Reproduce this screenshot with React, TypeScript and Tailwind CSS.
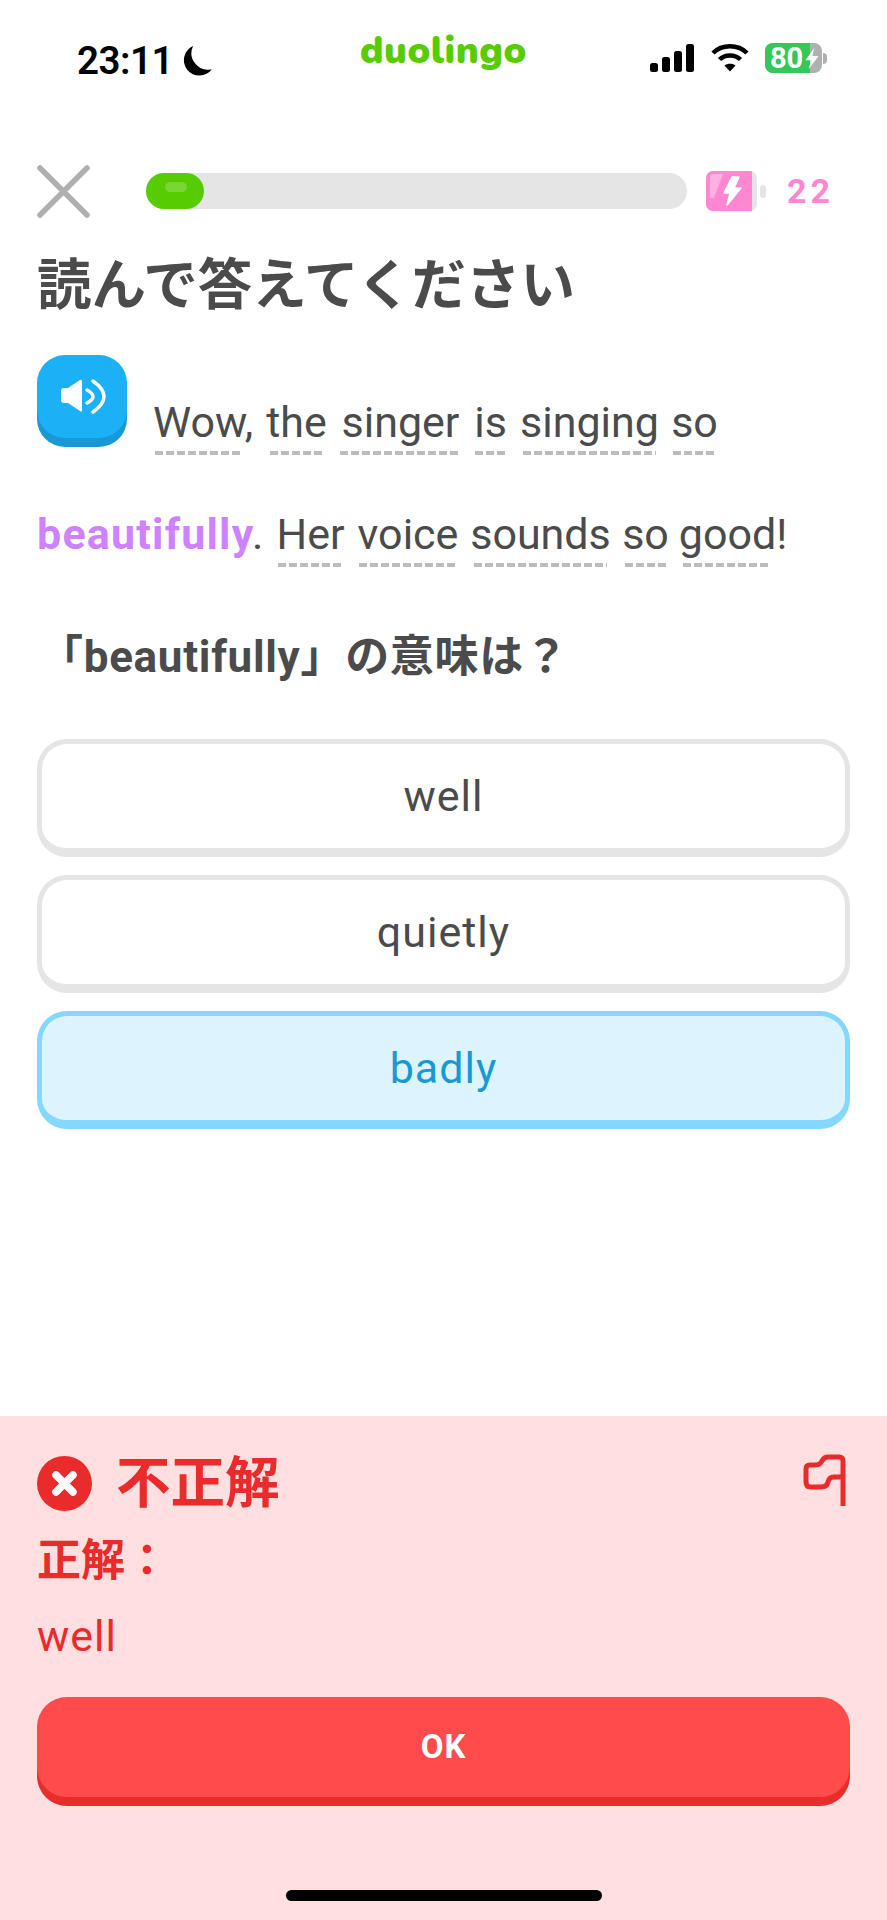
import { ReactNode } from 'react'

const SANS = "font-[Roboto,'Noto_Sans_CJK_JP',sans-serif]"

// one tappable word, dashed line underneath; the line is narrower than the glyphs on some words
function Word({ className, children }: { className: string; children: ReactNode }) {
  return (
    <span className={`flex flex-col shrink-0 ${className}`}>
      <span className="flex justify-center whitespace-nowrap leading-[52px]">{children}</span>
      <span className="h-[4px] mt-[3px] bg-[repeating-linear-gradient(90deg,#bdbdbd_0_8px,transparent_8px_11px)]" />
    </span>
  )
}

function StatusBar() {
  return (
    <div className="grid grid-cols-3 items-start h-[96px] pt-[33px]">
      <div className="flex items-center gap-[9px] pl-[77px] pt-[8px]">
        <span className="text-[38.5px] leading-[40px] font-semibold text-black tracking-[-0.5px]">23:11</span>
        <svg width="31" height="33" viewBox="0 0 28 30">
          <path d="M10 1 A14 14 0 1 0 27 22 A15 15 0 0 1 10 1 Z" fill="#000" />
        </svg>
      </div>
      <div className="text-center text-[38px] leading-[36px] font-[Nunito,Lato,sans-serif] font-black text-[#58cc02] tracking-[0.5px]">
        duolingo
      </div>
      <div className="flex items-center justify-end gap-[17px] pr-[60px] pt-[10px]">
        <svg width="44" height="28" viewBox="0 0 44 28" fill="#000">
          <rect x="0" y="19" width="8" height="9" rx="2.5" />
          <rect x="12" y="13" width="8" height="15" rx="2.5" />
          <rect x="24" y="7" width="8" height="21" rx="2.5" />
          <rect x="36" y="0" width="8" height="28" rx="2.5" />
        </svg>
        <svg width="38" height="28" viewBox="0 0 38 28" fill="none" stroke="#000" strokeWidth="4.5">
          <path d="M2 9 C11 0 27 0 36 9" />
          <path d="M8.5 15.5 C14 10 24 10 29.5 15.5" />
          <path d="M19 27.5 L13.5 21.5 C16 19 22 19 24.5 21.5 Z" fill="#000" stroke="none" />
        </svg>
        <div className="flex items-center -ml-[1px]">
          <div className="relative flex h-[30px] w-[57px] rounded-[8px] bg-[#b0b0b0]">
            <div className="w-[45px] rounded-l-[8px] bg-[#34c759]" />
            <span className="absolute left-[5px] top-0 text-[29px] leading-[30px] font-bold text-white">80</span>
            <svg className="absolute left-[40px] top-[5px]" width="14" height="21" viewBox="0 0 15 24" fill="#fff">
              <path d="M10 0 L0 14 H6 L4 24 L15 9 H8 Z" />
            </svg>
          </div>
          <div className="ml-[1px] h-[11px] w-[4px] rounded-r-full bg-[#b0b0b0]" />
        </div>
      </div>
    </div>
  )
}

function TopRow() {
  return (
    <div className="flex items-center h-[54px] mt-[68px] pl-[37px]">
      <svg width="53" height="53" viewBox="0 0 53 53" fill="none" stroke="#afafaf" strokeWidth="5.5" strokeLinecap="round">
        <path d="M3 3 L50 50 M50 3 L3 50" />
      </svg>
      <div className="ml-[56px] h-[36px] w-[541px] rounded-full bg-[#e5e5e5]">
        <div className="h-full w-[58px] rounded-full bg-[#58cc02] pl-[19px] pt-[9px]">
          <div className="h-[10px] w-[22px] rounded-[5px] bg-[#79d634]" />
        </div>
      </div>
      <div className="ml-[19px] flex items-center">
        <div className="relative flex h-[40px] w-[51px] overflow-hidden rounded-[7px] bg-[#e5e5e5]">
          <div className="w-[46px] bg-[#ff86d0]" />
          <svg className="absolute left-0 top-0" width="46" height="40" viewBox="0 0 46 40">
            <path d="M4 6 Q4 3 7 3 H17 L8 27 H4 Z" fill="#ffafe0" />
            <path d="M26 6 L18 22 H24 L21 34 L35 17 H28 L33 6 Z" fill="#fff" stroke="#fff" strokeWidth="1.5" strokeLinejoin="round" />
          </svg>
        </div>
        <div className="ml-[3px] h-[13px] w-[6px] rounded-[3px] bg-[#e5e5e5]" />
      </div>
      <span className="ml-[21px] text-[34px] leading-none font-bold text-[#ff86d0] tracking-[4px]">22</span>
    </div>
  )
}

function Choice({ label, selected }: { label: string; selected?: boolean }) {
  return (
    <div
      className={
        selected
          ? 'flex h-[118px] items-center justify-center rounded-[30px] border-[5px] border-b-[9px] border-[#84d8ff] bg-[#ddf4ff] text-[#1899d6]'
          : 'flex h-[118px] items-center justify-center rounded-[30px] border-[5px] border-b-[9px] border-[#e5e5e5] bg-white text-[#4b4b4b]'
      }
    >
      <span className="text-[43px] tracking-[1px]">{label}</span>
    </div>
  )
}

export default function App() {
  return (
    <div className={`${SANS} flex min-h-[1920px] flex-col bg-white`}>
      <StatusBar />
      <TopRow />

      <main className="flex-1 px-[37px]">
        <h1 className="mt-[37px] text-[54.5px] leading-[60px] font-bold text-[#4b4b4b]">読んで答えてください</h1>

        <div className="mt-[40px] flex items-start text-[43px] text-[#4b4b4b]">
          <button type="button" className="relative h-[83px] w-[90px] shrink-0 rounded-[28px] bg-[#1cb0f6] shadow-[0_9px_0_#1899d6]">
            <svg className="absolute left-0 top-0" width="90" height="83" viewBox="0 0 90 83" fill="none">
              <path d="M24 36 Q24 33 27 33 H31 L43 25 Q45 24 45 27 V55 Q45 58 43 56 L31 48 H27 Q24 48 24 45 Z" fill="#fff" />
              <path d="M50 35 Q62 41.5 50 48" stroke="#fff" strokeWidth="3.5" strokeLinecap="round" />
              <path d="M56 26 Q78 41.5 56 57" stroke="#fff" strokeWidth="3.5" strokeLinecap="round" />
            </svg>
          </button>
          <div className="mt-[41px] ml-[28px] flex">
            <Word className="w-[88px]"><span className="ml-[8px]">Wow,</span></Word>
            <Word className="ml-[27px] w-[53px]">the</Word>
            <Word className="ml-[17px] w-[121px]">singer</Word>
            <Word className="ml-[14px] w-[31px]">is</Word>
            <Word className="ml-[17px] w-[133px]">singing</Word>
            <Word className="ml-[17px] w-[43px]">so</Word>
          </div>
        </div>

        <div className="mt-[53px] flex text-[43px] text-[#4b4b4b]">
          <span className="w-[215px] shrink-0 leading-[52px] font-bold text-[#ce82ff] tracking-[1.2px]">beautifully</span>
          <span className="w-[26px] shrink-0 leading-[52px]">.</span>
          <Word className="w-[65px]">Her</Word>
          <Word className="ml-[16px] w-[98px]">voice</Word>
          <Word className="ml-[17px] w-[133px]">sounds</Word>
          <Word className="ml-[18px] w-[41px]">so</Word>
          <Word className="ml-[17px] w-[88px]"><span className="ml-[12px]">good!</span></Word>
        </div>

        <p className="mt-[64px] ml-[2px] text-[44px] leading-[52px] font-bold text-[#4b4b4b] tracking-[0.7px]">「beautifully」の意味は？</p>

        <div className="mt-[56px] flex flex-col gap-[18px]">
          <Choice label="well" />
          <Choice label="quietly" />
          <Choice label="badly" selected />
        </div>
      </main>

      <footer className="relative h-[504px] bg-[#ffdfe0] px-[37px] pt-[37px] text-[#ea2b2b]">
        <div className="flex items-center justify-between">
          <div className="flex items-center gap-[24px]">
            <svg width="55" height="55" viewBox="0 0 55 55">
              <circle cx="27.5" cy="27.5" r="27.5" fill="#ea2b2b" />
              <path d="M19 19 L36 36 M36 19 L19 36" stroke="#fff" strokeWidth="7.5" strokeLinecap="round" />
            </svg>
            <span className="text-[54.5px] leading-[60px] font-bold">不正解</span>
          </div>
          <svg className="-mt-[6px] mr-[3px]" width="44" height="52" viewBox="0 0 44 52" fill="none" stroke="#ea2b2b" strokeWidth="5">
            <path d="M40 52 V7 Q40 3 36 3 H25 Q21 3 19 7 Q17 11 13 11 H7 Q3 11 3 15 V28 Q3 33 8 33 H18 Q24 33 25 28 Q26 23 31 23 H40" />
          </svg>
        </div>
        <p className="mt-[24px] text-[44px] leading-[48px] font-bold">正解：</p>
        <p className="mt-[25px] text-[43px] leading-[52px] tracking-[1px]">well</p>
        <button type="button" className="mt-[35px] flex h-[100px] w-full items-center justify-center rounded-[30px] bg-[#ff4b4b] shadow-[0_9px_0_#ea2b2b]">
          <span className="text-[33px] font-bold text-white tracking-[1px]">OK</span>
        </button>
        <div className="absolute bottom-[19px] left-[286px] h-[11px] w-[316px] rounded-full bg-black" />
      </footer>
    </div>
  )
}
